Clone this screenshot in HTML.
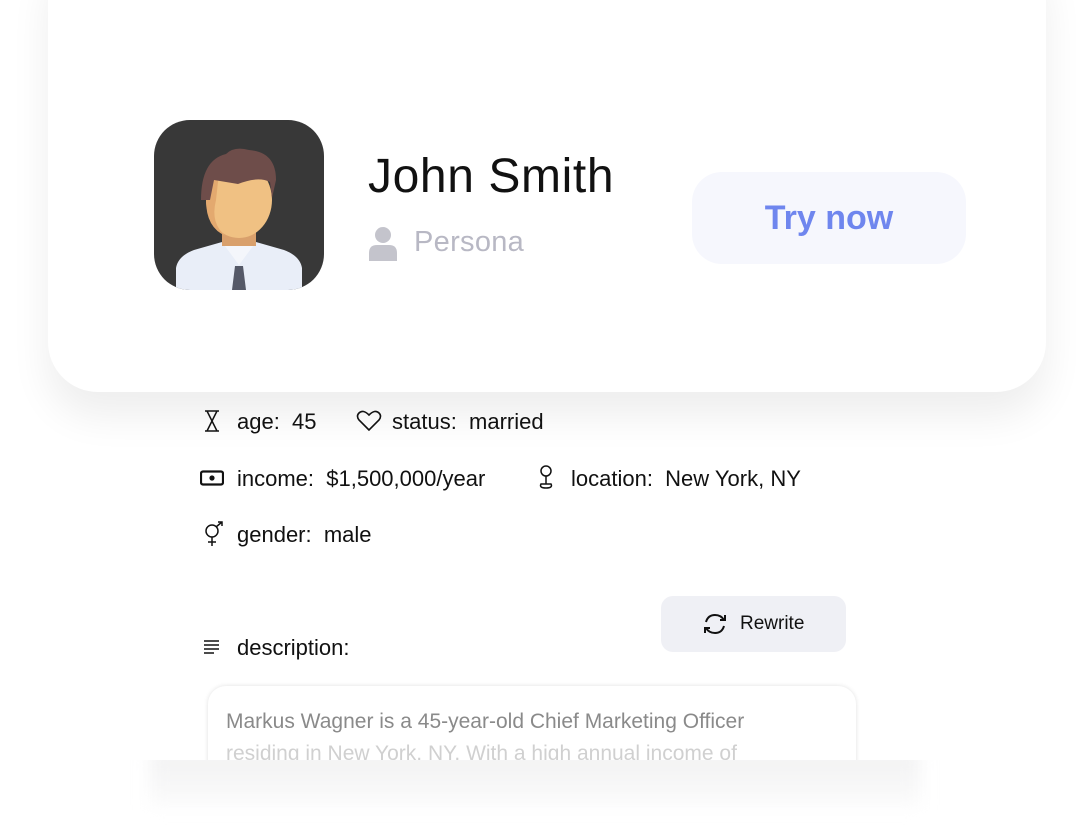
<!DOCTYPE html>
<html><head><style>
body{margin:0;width:1076px;height:840px;background:#fff;position:relative;overflow:hidden;font-family:"Liberation Sans",sans-serif;color:#111}
.card{position:absolute;left:48px;top:-60px;width:998px;height:452px;background:#fff;border-radius:50px;box-shadow:0 24px 40px rgba(0,0,0,0.07)}
.av{position:absolute;left:154px;top:120px;width:170px;height:170px;border-radius:36px;background:#383838;overflow:hidden}
.name{position:absolute;left:368px;top:149px;font-size:48px;font-weight:500;letter-spacing:0.6px}
.persona{position:absolute;left:414px;top:226px;font-size:29px;color:#b8b8c4;letter-spacing:0.3px}
.btn{position:absolute;left:692px;top:172px;width:274px;height:92px;border-radius:30px;background:#f6f7fd;color:#6f86ee;font-size:34px;font-weight:bold;text-align:center;line-height:92px}
.row{position:absolute;font-size:22px;color:#111}
.ic{position:absolute}
.rw{position:absolute;left:661px;top:596px;width:185px;height:56px;border-radius:12px;background:#eff0f5;font-size:19px;line-height:56px}
.desc{position:absolute;left:208px;top:686px;width:648px;height:120px;border-radius:18px;box-shadow:0 0 5px rgba(0,0,0,0.12);background:#fff}
.desc div{position:absolute;left:18px;font-size:21px;color:#8a8a8a;white-space:nowrap}
</style></head><body>
<div class="card"></div>
<div class="av"><svg width="170" height="170" viewBox="0 0 170 170">
<path d="M22 170 L22 148 Q24 136 40 130 L68 122 L102 122 L130 130 Q146 136 148 148 L148 170Z" fill="#e9eef8"/>
<path d="M68 122 L85 145 L102 122Z" fill="#f4f6fb"/>
<path d="M81 146 L89 146 L92 170 L78 170Z" fill="#555968"/>
<rect x="68" y="100" width="34" height="26" fill="#d9a06c"/>
<ellipse cx="85" cy="80" rx="33" ry="38" fill="#f0c183"/>
<path d="M52 80 Q52 50 66 44 L62 80 Q56 104 72 116 Q52 108 52 80Z" fill="#e3a96f"/>
<path d="M47 80 Q47 40 72 34 Q80 26 95 30 Q122 32 122 60 L118 78 L116 62 Q104 56 84 64 L60 60 L56 80Z" fill="#6e4d4a"/>
</svg></div>
<div class="name">John Smith</div>
<svg class="ic" style="left:367px;top:225px" width="32" height="36" viewBox="0 0 32 36"><circle cx="16" cy="10" r="8" fill="#c4c4cc"/><path d="M2 36 L2 28 Q2 20 10 20 L22 20 Q30 20 30 28 L30 36Z" fill="#c4c4cc"/></svg>
<div class="persona">Persona</div>
<div class="btn">Try now</div>

<svg class="ic" style="left:203px;top:410px" width="18" height="22" viewBox="0 0 18 22" fill="none" stroke="#111" stroke-width="1.5"><path d="M2 1H16M2 21H16M4 1 L14 21M14 1 L4 21"/></svg>
<div class="row" style="left:237px;top:409px">age:&nbsp; 45</div>
<svg class="ic" style="left:356px;top:410px" width="26" height="22" viewBox="0 0 26 22" fill="none" stroke="#111" stroke-width="1.6"><path d="M13 20 L3 10 Q0 6 3 3 Q7 -1 13 5 Q19 -1 23 3 Q26 6 23 10Z"/></svg>
<div class="row" style="left:392px;top:409px">status:&nbsp; married</div>

<svg class="ic" style="left:200px;top:470px" width="24" height="16" viewBox="0 0 24 16"><rect x="1" y="1.5" width="22" height="13" rx="2" fill="none" stroke="#111" stroke-width="2.2"/><circle cx="12" cy="8" r="2.6" fill="#111"/></svg>
<div class="row" style="left:237px;top:466px">income:&nbsp; $1,500,000/year</div>
<svg class="ic" style="left:537px;top:465px" width="18" height="26" viewBox="0 0 18 26" fill="none" stroke="#111" stroke-width="1.5"><circle cx="9" cy="6" r="5"/><path d="M9 11V19M4 19 Q2 23 9 23 Q16 23 14 19Z"/></svg>
<div class="row" style="left:571px;top:466px">location:&nbsp; New York, NY</div>

<svg class="ic" style="left:203px;top:521px" width="22" height="26" viewBox="0 0 22 26" fill="none" stroke="#111" stroke-width="1.5"><circle cx="9" cy="10" r="6"/><path d="M9 16V25M5 21H13M13 6L19 1M15 1H19V5"/></svg>
<div class="row" style="left:237px;top:522px">gender:&nbsp; male</div>

<svg class="ic" style="left:203px;top:640px" width="17" height="14" viewBox="0 0 17 14" stroke="#111" stroke-width="1.4"><path d="M1 1H16M1 5H16M1 9H16M1 13H11"/></svg>
<div class="row" style="left:237px;top:635px">description:</div>

<div class="rw"><svg style="position:absolute;left:41px;top:16px" width="26" height="24" viewBox="0 0 26 24" fill="none" stroke="#111" stroke-width="2"><path d="M4 10 Q6 3 13 3 Q19 3 22 8M22 14 Q20 21 13 21 Q7 21 4 16"/><path d="M18 8H23V3M8 16H3V21" /></svg><span style="position:absolute;left:79px">Rewrite</span></div>

<div class="desc"><div style="top:24px">Markus Wagner is a 45-year-old Chief Marketing Officer</div><div style="top:56px;color:#d0d0d0">residing in New York, NY. With a high annual income of</div></div>
<div style="position:absolute;left:0;top:760px;width:1076px;height:80px;background:#fff;overflow:hidden"><div style="position:absolute;left:150px;top:-10px;width:770px;height:55px;background:linear-gradient(#f1f1f2,#fbfbfb);filter:blur(8px)"></div></div>
</body></html>
